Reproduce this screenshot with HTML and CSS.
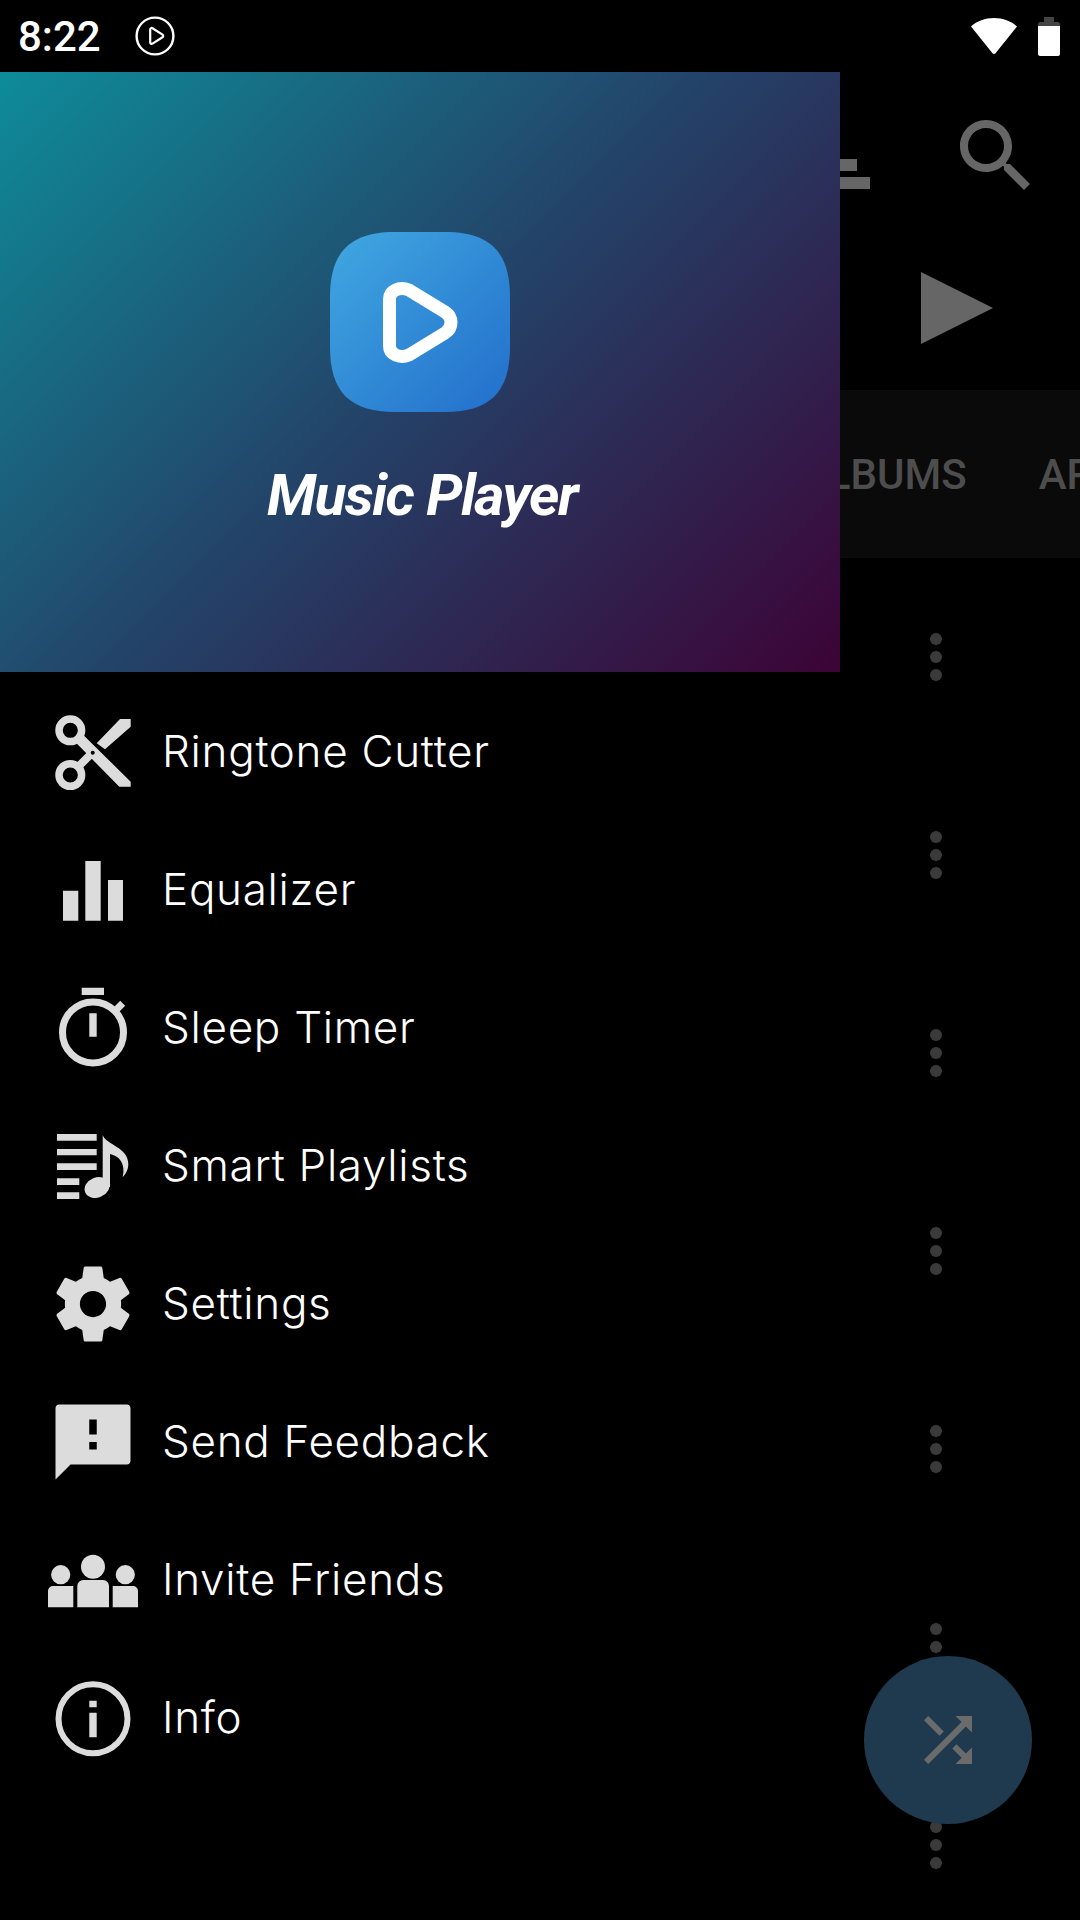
FILE: index.html
```html
<!DOCTYPE html>
<html>
  <head>
    <title>Music Player</title>
    <link rel="stylesheet" href="styles.css">
  </head>
  <body>
    <div class="phone">
      <div class="status-bar">
        <div class="status-left">
          <span class="clock">8:22</span>
          <svg class="status-play" width="40" height="40" viewBox="0 0 40 40">
            <circle cx="20" cy="20" r="18.4" fill="none" stroke="#fff" stroke-width="2.4"/>
            <path d="M15.2 13.6c0-1.4 1.2-2 2.3-1.4l10 6.4c1 .7 1 2 0 2.700l-10 6.300c-1.100.7-2.300 0-2.300-1.300z" fill="none" stroke="#fff" stroke-width="2.200"/>
          </svg>
        </div>
        <div class="status-right">
          <svg width="46" height="36" viewBox="0 0 46 36">
            <path d="M23 0C14 0 6 3 0 8.500L21.500 35.200c.8 1 2.200 1 3 0L46 8.500C40 3 32 0 23 0z" fill="#fff"/>
          </svg>
          <svg width="22" height="39" viewBox="0 0 22 39">
            <path d="M6 0h10v5h4c1 0 2 1 2 2v3H0V7c0-1 1-2 2-2h4z" fill="#444"/>
            <path d="M0 9h22v28c0 1-1 2-2 2H2c-1 0-2-1-2-2z" fill="#fff"/>
          </svg>
        </div>
      </div>

      <div class="app">
        <div class="toolbar">
          <div class="sort-icon">
            <div class="sort-short"></div>
            <div class="sort-long"></div>
          </div>
          <svg class="search-icon" width="96" height="96" viewBox="0 0 24 24">
            <path d="M15.500 14h-.79l-.28-.27C15.410 12.590 16 11.110 16 9.500 16 5.910 13.090 3 9.500 3S3 5.910 3 9.500 5.910 16 9.500 16c1.610 0 3.090-.59 4.230-1.570l.27.28v.79l5 4.990L20.490 19l-4.990-5zm-6 0C7.010 14 5 11.990 5 9.500S7.010 5 9.500 5 14 7.010 14 9.500 11.990 14 9.500 14z" fill="#666"/>
          </svg>
        </div>
        <div class="play-row">
          <svg width="72" height="72" viewBox="0 0 72 72">
            <path d="M0 0L72 36 0 72z" fill="#666"/>
          </svg>
        </div>
        <div class="tabs">
          <span>TRACKS</span>
          <span>ALBUMS</span>
          <span>ARTISTS</span>
        </div>
        <div class="track-list">
          <div class="track"><div class="kebab"><i></i><i></i><i></i></div></div>
          <div class="track"><div class="kebab"><i></i><i></i><i></i></div></div>
          <div class="track"><div class="kebab"><i></i><i></i><i></i></div></div>
          <div class="track"><div class="kebab"><i></i><i></i><i></i></div></div>
          <div class="track"><div class="kebab"><i></i><i></i><i></i></div></div>
          <div class="track"><div class="kebab"><i></i><i></i><i></i></div></div>
          <div class="track"><div class="kebab"><i></i><i></i><i></i></div></div>
        </div>
        <div class="fab">
          <svg width="72" height="72" viewBox="0 0 24 24">
            <path d="M10.590 9.170L5.410 4 4 5.410l5.170 5.170 1.420-1.410zM14.500 4l2.040 2.040L4 18.590 5.410 20 17.960 7.460 20 9.500V4h-5.500zm.33 9.410l-1.410 1.410 3.130 3.130L14.500 20H20v-5.500l-2.040 2.040-3.130-3.130z" fill="#6b6b6b"/>
          </svg>
        </div>
      </div>

      <div class="drawer">
        <div class="drawer-header">
          <svg class="logo" width="180" height="180" viewBox="0 0 180 180">
            <defs>
              <linearGradient id="logoFill" x1="0" y1="0" x2="1" y2="1">
                <stop offset="0" stop-color="#41a8e1"/>
                <stop offset="1" stop-color="#226ecb"/>
              </linearGradient>
            </defs>
            <path d="M65 0H115C160 0 180 20 180 65V115C180 160 160 180 115 180H65C20 180 0 160 0 115V65C0 20 20 0 65 0Z" fill="url(#logoFill)"/>
            <path d="M59.500 67V114C59.500 122 69 127 79 123L115 101C123 96 123 85 115 80L79 58C69 54 59.500 59 59.500 67Z" fill="none" stroke="#fff" stroke-width="13" stroke-linejoin="round"/>
          </svg>
          <div class="app-name">Music Player</div>
        </div>
        <div class="menu">
          <div class="menu-item">
            <svg class="menu-icon" viewBox="0 0 96 96">
              <circle cx="25.300" cy="26.300" r="11.300" fill="none" stroke="#dcdcdc" stroke-width="7.500"/>
              <circle cx="25.300" cy="71" r="11.300" fill="none" stroke="#dcdcdc" stroke-width="7.500"/>
              <path d="M38.300 31L85.700 77.700V82.700H74.300L30 37.700zM51.700 39.300L75 15H85.700V22.700L60 45.300z" fill="#dcdcdc"/>
              <path d="M33 63L47 49" stroke="#dcdcdc" stroke-width="8"/>
              <circle cx="47.700" cy="48.700" r="2" fill="#000"/>
            </svg>
            <span>Ringtone Cutter</span>
          </div>
          <div class="menu-item">
            <svg class="menu-icon" viewBox="0 0 96 96">
              <path d="M18 48.700H33.300V78.700H18zM40.300 19H55.700V78.700H40.300zM63 38H78V78.700H63z" fill="#dcdcdc"/>
            </svg>
            <span>Equalizer</span>
          </div>
          <div class="menu-item">
            <svg class="menu-icon" viewBox="0 0 96 96">
              <circle cx="48" cy="52.400" r="30.500" fill="none" stroke="#dcdcdc" stroke-width="7"/>
              <path d="M36.700 7.700H59V15H36.700zM44.300 33.300H51.700V56.700H44.300z" fill="#dcdcdc"/>
              <path d="M71 30L77.700 23.300" stroke="#dcdcdc" stroke-width="7"/>
            </svg>
            <span>Sleep Timer</span>
          </div>
          <div class="menu-item">
            <svg class="menu-icon" viewBox="0 0 96 96">
              <path d="M12 16H51.700V22.700H12zM12 31H51.700V37.300H12zM12 45.300H51.700V52H12zM12 60.300H34.300V67H12zM12 74.300H34.300V81H12z" fill="#dcdcdc"/>
              <ellipse cx="52" cy="69.500" rx="12.800" ry="10" transform="rotate(-22 52 69.500)" fill="#dcdcdc"/>
              <path d="M57.700 17C61 27 83.300 29 83.300 46C83.300 52 80.500 56 77.700 59.300C80 50 78 39 65 36V69H57.700z" fill="#dcdcdc"/>
            </svg>
            <span>Smart Playlists</span>
          </div>
          <div class="menu-item">
            <svg class="menu-icon" viewBox="-0.800 -0.800 25.600 25.600">
              <path d="M19.430 12.980c.04-.32.07-.64.07-.98s-.03-.66-.07-.98l2.110-1.650c.19-.15.24-.42.12-.64l-2-3.460c-.12-.22-.39-.3-.61-.22l-2.490 1c-.52-.4-1.080-.73-1.690-.98l-.38-2.650C14.460 2.180 14.250 2 14 2h-4c-.25 0-.46.18-.49.42l-.38 2.650c-.61.25-1.170.59-1.690.98l-2.490-1c-.23-.09-.49 0-.61.22l-2 3.460c-.13.22-.07.49.12.64l2.110 1.650c-.04.32-.07.65-.07.98s.03.66.07.98l-2.110 1.650c-.19.15-.24.42-.12.64l2 3.460c.12.22.39.3.61.22l2.490-1c.52.4 1.080.73 1.690.98l.38 2.650c.03.24.24.42.49.42h4c.25 0 .46-.18.49-.42l.38-2.650c.61-.25 1.170-.59 1.690-.98l2.490 1c.23.09.49 0 .61-.22l2-3.460c.12-.22.07-.49-.12-.64l-2.110-1.650zM12 15.500c-1.930 0-3.500-1.570-3.500-3.500s1.570-3.500 3.500-3.500 3.500 1.570 3.500 3.500-1.570 3.500-3.500 3.500z" fill="#dcdcdc"/>
            </svg>
            <span>Settings</span>
          </div>
          <div class="menu-item">
            <svg class="menu-icon" viewBox="-0.800 -0.800 25.600 25.600">
              <path d="M21 2H3c-.6 0-1 .4-1 1L2 22l4-4h15c.6 0 1-.4 1-1V3c0-.6-.4-1-1-1zm-8 12h-2v-2h2v2zm0-4h-2V6h2v4z" fill="#dcdcdc"/>
            </svg>
            <span>Send Feedback</span>
          </div>
          <div class="menu-item">
            <svg class="menu-icon" viewBox="0 0 96 96">
              <circle cx="48" cy="34.700" r="12" fill="#dcdcdc"/>
              <circle cx="15.700" cy="42.700" r="9.600" fill="#dcdcdc"/>
              <circle cx="80.300" cy="42.700" r="9.600" fill="#dcdcdc"/>
              <path d="M32.300 54a6 6 0 0 1 6-6H58a6 6 0 0 1 6 6V75.300H32.300zM3 59a5 5 0 0 1 5-5H28.300V75.300H3zM67.700 54H88a5 5 0 0 1 5 5V75.300H67.700z" fill="#dcdcdc"/>
            </svg>
            <span>Invite Friends</span>
          </div>
          <div class="menu-item">
            <svg class="menu-icon" viewBox="0 0 96 96">
              <circle cx="48" cy="48.700" r="34.500" fill="none" stroke="#dcdcdc" stroke-width="6"/>
              <path d="M44.300 30.700H51.700V37.300H44.300zM44.300 42.700H51.700V67.300H44.300z" fill="#dcdcdc"/>
            </svg>
            <span>Info</span>
          </div>
        </div>
      </div>
    </div>
  </body>
</html>
```

FILE: styles.css
```css
* {
  box-sizing: border-box;
}
html,
body {
  margin: 0;
  padding: 0;
  background-color: #000;
}
.phone {
  position: relative;
  width: 1080px;
  height: 1920px;
  overflow: hidden;
  background-color: #000;
}

/* status bar */
.status-bar {
  display: flex;
  justify-content: space-between;
  align-items: center;
  height: 72px;
  padding: 0 20px 0 18px;
}
.status-left {
  display: flex;
  align-items: center;
  gap: 34px;
}
.clock {
  font-family: Roboto, sans-serif;
  font-weight: 500;
  font-size: 42px;
  color: #fff;
}
.status-right {
  display: flex;
  align-items: center;
  gap: 21px;
}

/* app behind the drawer */
.toolbar {
  display: flex;
  justify-content: flex-end;
  height: 174px;
  padding: 36px 36px 0 0;
}
.sort-icon {
  display: flex;
  flex-direction: column;
  gap: 6px;
  width: 78px;
  margin: 51px 78px 0 0;
}
.sort-short {
  width: 65px;
  height: 12px;
  background-color: #666;
}
.sort-long {
  width: 78px;
  height: 12px;
  background-color: #666;
}
.play-row {
  display: flex;
  justify-content: flex-end;
  height: 144px;
  padding: 26px 87px 0 0;
}
.tabs {
  display: flex;
  align-items: center;
  gap: 72px;
  height: 168px;
  background-color: #0a0a0a;
  font-family: Roboto, sans-serif;
  font-weight: 500;
  font-size: 42px;
  color: #4d4d4d;
  white-space: nowrap;
  overflow: hidden;
  padding-left: 569px;
}
.track {
  display: flex;
  justify-content: flex-end;
  align-items: center;
  height: 198px;
  padding-right: 138px;
}
.kebab {
  display: flex;
  flex-direction: column;
  gap: 6px;
}
.kebab i {
  display: block;
  width: 12px;
  height: 12px;
  border-radius: 50%;
  background-color: #3a3a3a;
}
.fab {
  position: absolute;
  left: 864px;
  top: 1656px;
  display: flex;
  justify-content: center;
  align-items: center;
  width: 168px;
  height: 168px;
  border-radius: 50%;
  background-color: #1f3a4e;
}

/* drawer */
.drawer {
  position: absolute;
  left: 0;
  top: 72px;
  bottom: 0;
  width: 840px;
  background-color: #000;
}
.drawer-header {
  display: flex;
  flex-direction: column;
  align-items: center;
  height: 600px;
  padding-top: 160px;
  background: linear-gradient(135deg, #0e8c99 0%, #244268 50%, #3c0336 100%);
}
.app-name {
  margin: 48px 0 0 4px;
  font-family: Roboto, sans-serif;
  font-weight: 700;
  font-style: italic;
  font-size: 58px;
  line-height: 70px;
  letter-spacing: -1.5px;
  color: #fff;
}
.menu {
  display: flex;
  flex-direction: column;
  padding-top: 11px;
}
.menu-item {
  display: flex;
  align-items: center;
  gap: 21px;
  height: 138px;
  padding: 0 0 2px 45px;
  font-family: Inter, sans-serif;
  font-weight: 300;
  font-size: 44px;
  letter-spacing: 0.7px;
  color: #fff;
}
.menu-icon {
  width: 96px;
  height: 96px;
  flex: none;
  margin-bottom: -2px;
}
```
